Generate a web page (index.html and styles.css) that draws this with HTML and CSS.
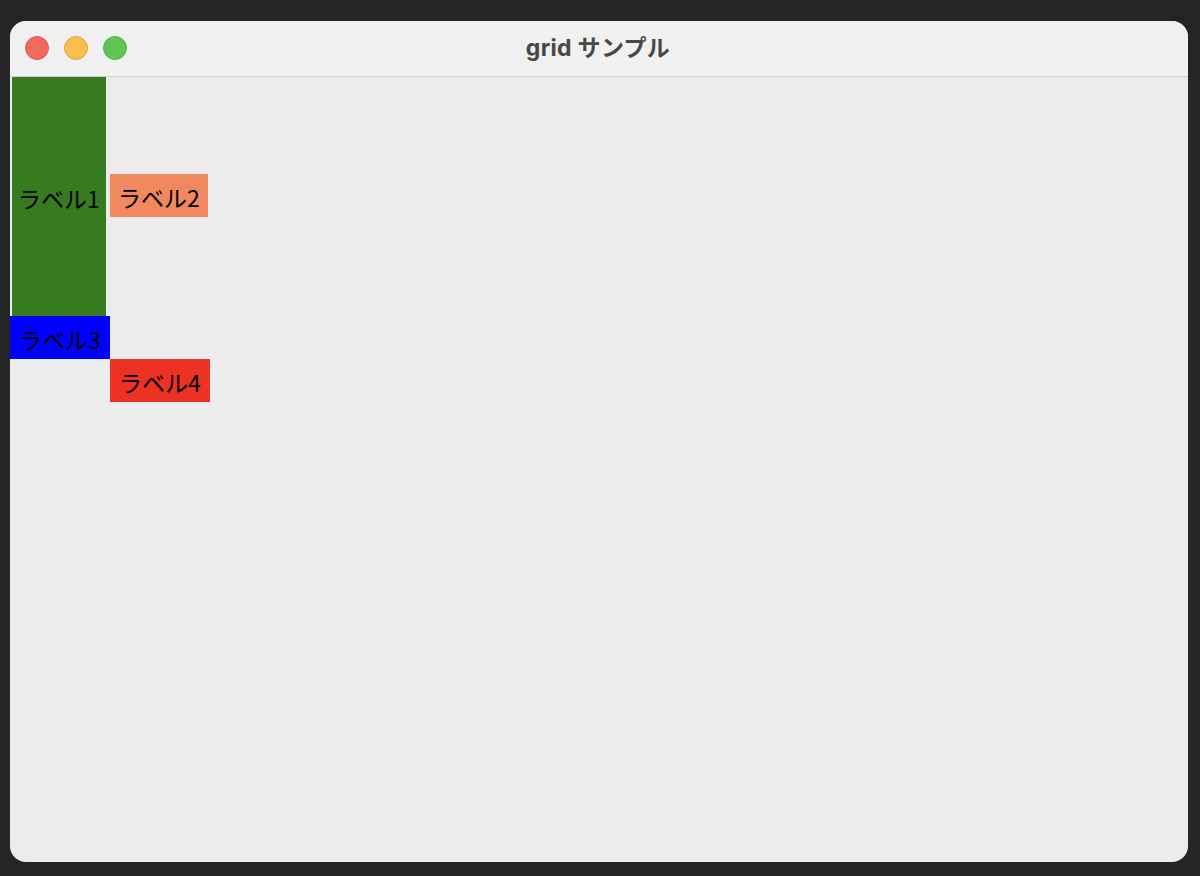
FILE: index.html
```html
<!DOCTYPE html>
<html lang="ja">
<head>
<meta charset="utf-8">
<title>grid サンプル</title>
<link rel="stylesheet" href="styles.css">
</head>
<body>
<div class="window">
  <div class="titlebar">
    <div class="lights">
      <span class="light red"></span>
      <span class="light yellow"></span>
      <span class="light green"></span>
    </div>
    <div class="title">grid サンプル</div>
  </div>
  <div class="content">
    <div class="grid">
      <div class="lbl l1">ラベル1</div>
      <div class="lbl l2">ラベル2</div>
      <div class="lbl l3">ラベル3</div>
      <div class="lbl l4">ラベル4</div>
    </div>
  </div>
</div>
</body>
</html>
```

FILE: styles.css
```css
html, body {
  margin: 0;
  padding: 0;
}
body {
  background: #252527;
  width: 1200px;
  height: 876px;
  padding: 21px 12px 14px 10px;
  box-sizing: border-box;
  font-family: "Noto Sans CJK JP", "Noto Sans", sans-serif;
}
.window {
  width: 1178px;
  height: 841px;
  border-radius: 16px;
  overflow: hidden;
  background: #ececec;
  display: flex;
  flex-direction: column;
}
.titlebar {
  height: 55px;
  flex: none;
  background: #eff0ef;
  border-bottom: 1px solid #cdd0cf;
  position: relative;
  display: flex;
  align-items: center;
  justify-content: center;
}
.lights {
  position: absolute;
  left: 15px;
  top: 15px;
  display: flex;
  gap: 15px;
}
.light {
  width: 24px;
  height: 24px;
  border-radius: 50%;
  box-sizing: border-box;
}
.light.red { background: #ee6a5f; border: 1px solid #e1574c; }
.light.yellow { background: #f5be4f; border: 1px solid #e3a93d; }
.light.green { background: #61c554; border: 1px solid #51b044; }
.title {
  font-family: "Inter", "Noto Sans CJK JP", sans-serif;
  font-weight: 700;
  font-size: 23px;
  color: #474747;
  margin-left: -2px;
  margin-top: -5px;
  letter-spacing: 0.3px;
}
.content {
  flex: 1;
}
.grid {
  display: grid;
  grid-template-columns: 100px 100px;
  grid-template-rows: 239px 43px 43px;
}
.lbl {
  font-size: 23px;
  color: #000;
  display: flex;
  align-items: center;
  justify-content: center;
  height: 43px;
  box-sizing: border-box;
  padding-top: 4px;
  line-height: 1;
  white-space: nowrap;
}
.l1 {
  grid-column: 1;
  grid-row: 1;
  height: auto;
  margin: 0 4px 0 2px;
  background: #367b20;
}
.l2 {
  grid-column: 2;
  grid-row: 1;
  align-self: center;
  justify-self: start;
  width: 98px;
  background: #f0895e;
  margin-bottom: 2px;
}
.l3 {
  grid-column: 1;
  grid-row: 2;
  background: #0000ff;
}
.l4 {
  grid-column: 2;
  grid-row: 3;
  background: #ec3323;
}
```
